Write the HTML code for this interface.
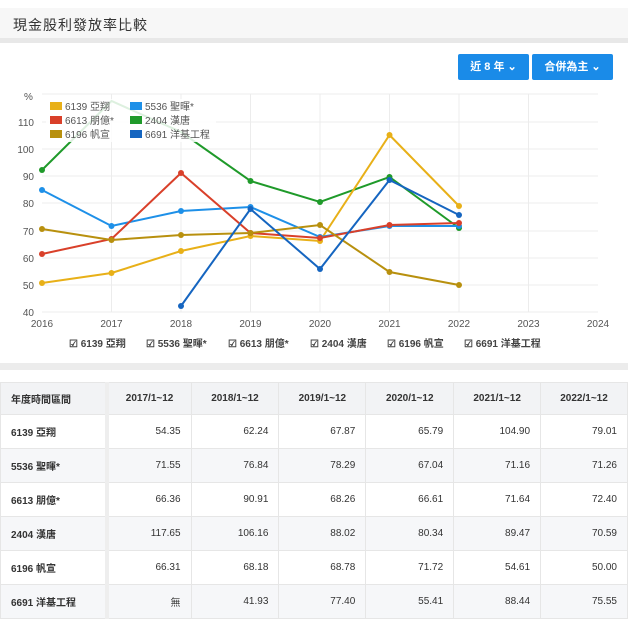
<!DOCTYPE html>
<html><head><meta charset="utf-8"><style>
body{margin:0;width:628px;height:617px;overflow:hidden;background:#fff;font-family:"Liberation Sans","Noto Sans CJK TC",sans-serif;position:relative}
.tb{position:absolute;left:0;top:8px;width:628px;height:30px;background:#f7f7f7}
.tb span{position:absolute;left:13px;top:7px;font-size:14px;color:#333;letter-spacing:1px}
.band{position:absolute;left:0;width:628px;background:#e8e8e8}
.btn{position:absolute;top:54px;height:26px;background:#1a8be8;color:#fff;font-size:11px;font-weight:bold;border-radius:2px;text-align:center;line-height:26px}
table{position:absolute;left:0;top:382px;border-collapse:collapse;font-size:10px;color:#333}
td{height:33px;border:1px solid #e6e6e6;padding:0 10px;text-align:right}
td:first-child{text-align:left;font-weight:bold;border-right:4px solid #eee}
tr.h td{background:#f2f3f5;font-weight:bold;text-align:center;height:31px}
tr.g td{background:#f6f7f9}
</style></head><body>
<div class="tb"><span>現金股利發放率比較</span></div>
<div class="band" style="top:38px;height:5px"></div>
<div class="btn" style="left:458px;width:71px">近 8 年 ⌄</div>
<div class="btn" style="left:532px;width:81px">合併為主 ⌄</div>
<svg style="position:absolute;left:0;top:0" width="628" height="360" font-family="Liberation Sans,Noto Sans CJK TC,sans-serif" font-size="10" fill="#555">
<g stroke="#ececec" stroke-width="1">
<line x1="42" y1="94" x2="598" y2="94"/><line x1="42" y1="122" x2="598" y2="122"/><line x1="42" y1="149" x2="598" y2="149"/><line x1="42" y1="176" x2="598" y2="176"/><line x1="42" y1="203" x2="598" y2="203"/><line x1="42" y1="231" x2="598" y2="231"/><line x1="42" y1="258" x2="598" y2="258"/><line x1="42" y1="285" x2="598" y2="285"/><line x1="42" y1="312" x2="598" y2="312"/>
<line x1="111.5" y1="94" x2="111.5" y2="312"/><line x1="181" y1="94" x2="181" y2="312"/><line x1="250.5" y1="94" x2="250.5" y2="312"/><line x1="320" y1="94" x2="320" y2="312"/><line x1="389.5" y1="94" x2="389.5" y2="312"/><line x1="459" y1="94" x2="459" y2="312"/><line x1="528.5" y1="94" x2="528.5" y2="312"/>
</g>
<text x="24" y="100">%</text>
<g text-anchor="end"><text x="34" y="126">110</text><text x="34" y="153">100</text><text x="34" y="180">90</text><text x="34" y="207">80</text><text x="34" y="235">70</text><text x="34" y="262">60</text><text x="34" y="289">50</text><text x="34" y="316">40</text></g>
<g text-anchor="middle"><text x="42" y="327">2016</text><text x="111.5" y="327">2017</text><text x="181" y="327">2018</text><text x="250.5" y="327">2019</text><text x="320" y="327">2020</text><text x="389.5" y="327">2021</text><text x="459" y="327">2022</text><text x="528.5" y="327">2023</text><text x="598" y="327">2024</text></g>
<g fill="none" stroke-width="2">
<polyline stroke="#1f9a2a" points="42,170 111.5,101 181,132 250.5,181 320,202 389.5,177 459,228"/>
<polyline stroke="#e8b018" points="42,283 111.5,273 181,251 250.5,236 320,241 389.5,135 459,206"/>
<polyline stroke="#1e90e8" points="42,190 111.5,226 181,211 250.5,207 320,237 389.5,226 459,226"/>
<polyline stroke="#d9402a" points="42,254 111.5,239 181,173 250.5,233 320,238 389.5,225 459,223"/>
<polyline stroke="#b8900e" points="42,229 111.5,240 181,235 250.5,233 320,225 389.5,272 459,285"/>
<polyline stroke="#1565c0" points="181,306 250.5,209 320,269 389.5,180 459,215"/>
</g>
<g fill="#1f9a2a"><circle cx="42" cy="170" r="3"/><circle cx="250.5" cy="181" r="3"/><circle cx="320" cy="202" r="3"/><circle cx="389.5" cy="177" r="3"/><circle cx="459" cy="228" r="3"/></g>
<g fill="#e8b018"><circle cx="42" cy="283" r="3"/><circle cx="111.5" cy="273" r="3"/><circle cx="181" cy="251" r="3"/><circle cx="250.5" cy="236" r="3"/><circle cx="320" cy="241" r="3"/><circle cx="389.5" cy="135" r="3"/><circle cx="459" cy="206" r="3"/></g>
<g fill="#1e90e8"><circle cx="42" cy="190" r="3"/><circle cx="111.5" cy="226" r="3"/><circle cx="181" cy="211" r="3"/><circle cx="250.5" cy="207" r="3"/><circle cx="320" cy="237" r="3"/><circle cx="389.5" cy="226" r="3"/><circle cx="459" cy="226" r="3"/></g>
<g fill="#d9402a"><circle cx="42" cy="254" r="3"/><circle cx="111.5" cy="239" r="3"/><circle cx="181" cy="173" r="3"/><circle cx="250.5" cy="233" r="3"/><circle cx="320" cy="238" r="3"/><circle cx="389.5" cy="225" r="3"/><circle cx="459" cy="223" r="3"/></g>
<g fill="#b8900e"><circle cx="42" cy="229" r="3"/><circle cx="111.5" cy="240" r="3"/><circle cx="181" cy="235" r="3"/><circle cx="250.5" cy="233" r="3"/><circle cx="320" cy="225" r="3"/><circle cx="389.5" cy="272" r="3"/><circle cx="459" cy="285" r="3"/></g>
<g fill="#1565c0"><circle cx="181" cy="306" r="3"/><circle cx="250.5" cy="209" r="3"/><circle cx="320" cy="269" r="3"/><circle cx="389.5" cy="180" r="3"/><circle cx="459" cy="215" r="3"/></g>
<rect x="46" y="99" width="170" height="43" fill="#fff" opacity="0.85"/>
<g font-size="10" fill="#555">
<rect x="50" y="102" width="12" height="8" fill="#e8b018"/><text x="65" y="110">6139 亞翔</text>
<rect x="130" y="102" width="12" height="8" fill="#1e90e8"/><text x="145" y="110">5536 聖暉*</text>
<rect x="50" y="116" width="12" height="8" fill="#d9402a"/><text x="65" y="124">6613 朋億*</text>
<rect x="130" y="116" width="12" height="8" fill="#1f9a2a"/><text x="145" y="124">2404 漢唐</text>
<rect x="50" y="130" width="12" height="8" fill="#b8900e"/><text x="65" y="138">6196 帆宣</text>
<rect x="130" y="130" width="12" height="8" fill="#1565c0"/><text x="145" y="138">6691 洋基工程</text>
</g>
<g font-size="10" font-weight="bold" fill="#444">
<text x="69" y="347">☑ 6139 亞翔</text><text x="146" y="347">☑ 5536 聖暉*</text><text x="228" y="347">☑ 6613 朋億*</text><text x="310" y="347">☑ 2404 漢唐</text><text x="387" y="347">☑ 6196 帆宣</text><text x="464" y="347">☑ 6691 洋基工程</text>
</g>
</svg>
<div class="band" style="top:363px;height:7px;background:#ececec"></div>
<table>
<tr class="h"><td style="width:84px;text-align:left">年度時間區間</td><td style="width:62px">2017/1~12</td><td style="width:67px">2018/1~12</td><td style="width:66px">2019/1~12</td><td style="width:67px">2020/1~12</td><td style="width:66px">2021/1~12</td><td style="width:66px">2022/1~12</td></tr>
<tr><td>6139 亞翔</td><td>54.35</td><td>62.24</td><td>67.87</td><td>65.79</td><td>104.90</td><td>79.01</td></tr>
<tr class="g"><td>5536 聖暉*</td><td>71.55</td><td>76.84</td><td>78.29</td><td>67.04</td><td>71.16</td><td>71.26</td></tr>
<tr><td>6613 朋億*</td><td>66.36</td><td>90.91</td><td>68.26</td><td>66.61</td><td>71.64</td><td>72.40</td></tr>
<tr class="g"><td>2404 漢唐</td><td>117.65</td><td>106.16</td><td>88.02</td><td>80.34</td><td>89.47</td><td>70.59</td></tr>
<tr><td>6196 帆宣</td><td>66.31</td><td>68.18</td><td>68.78</td><td>71.72</td><td>54.61</td><td>50.00</td></tr>
<tr class="g"><td>6691 洋基工程</td><td>無</td><td>41.93</td><td>77.40</td><td>55.41</td><td>88.44</td><td>75.55</td></tr>
</table>
</body></html>
